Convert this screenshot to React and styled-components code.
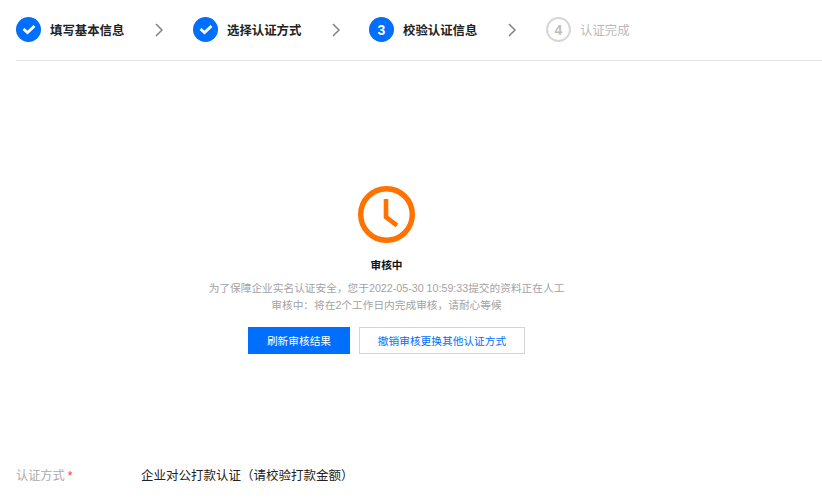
import React from 'react';
import styled, { createGlobalStyle } from 'styled-components';

const GlobalStyle = createGlobalStyle`
  html, body { margin: 0; padding: 0; background: #fff; }
  body { font-family: "Liberation Sans", "Noto Sans CJK SC", sans-serif; overflow: hidden; }
`;

const Page = styled.div`
  width: 822px;
  height: 500px;
  padding-left: 16px;
  box-sizing: border-box;
  overflow: hidden;
`;

const Steps = styled.div`
  display: flex;
  align-items: center;
  height: 61px;
  padding-bottom: 1px;
  box-sizing: border-box;
  border-bottom: 1px solid #e2e2e2;
`;

const Step = styled.div`
  display: flex;
  align-items: center;
  width: ${(p) => p.$width}px;
`;

const Circle = styled.div`
  width: 25px;
  height: 25px;
  border-radius: 50%;
  box-sizing: border-box;
  display: flex;
  align-items: center;
  justify-content: center;
  font-size: 14px;
  font-weight: 700;
  color: ${(p) => (p.$off ? '#bdbdbd' : '#fff')};
  background: ${(p) => (p.$off ? '#fff' : '#006eff')};
  border: ${(p) => (p.$off ? '2px solid #d6d6d6' : 'none')};
`;

const StepLabel = styled.span`
  margin-left: 9px;
  font-size: 12.4px;
  font-weight: ${(p) => (p.$off ? 400 : 700)};
  color: ${(p) => (p.$off ? '#bbbbbb' : '#222')};
  white-space: nowrap;
`;

const Arrow = styled.svg`
  width: 8px;
  height: 14px;
  margin-left: 31px;
  flex: none;
`;

const Result = styled.div`
  width: 741px;
  margin-top: 125px;
  display: flex;
  flex-direction: column;
  align-items: center;
`;

const Clock = styled.svg`
  width: 57px;
  height: 57px;
  display: block;
`;

const Title = styled.div`
  margin-top: 14px;
  font-size: 10.7px;
  line-height: 16px;
  font-weight: 700;
  color: #111;
`;

const Desc = styled.div`
  margin-top: 7px;
  width: 360px;
  font-size: 10.7px;
  line-height: 16.5px;
  color: #a3a3a3;
  text-align: center;
`;

const Buttons = styled.div`
  margin-top: 14px;
  display: flex;
  gap: 9px;
`;

const Button = styled.button`
  height: 27px;
  width: ${(p) => p.$width}px;
  padding: 0;
  box-sizing: border-box;
  font-family: inherit;
  font-size: 10.7px;
  border: ${(p) => (p.$primary ? 'none' : '1px solid #d4d4d4')};
  background: ${(p) => (p.$primary ? '#006eff' : '#fff')};
  color: ${(p) => (p.$primary ? '#fff' : '#006eff')};
`;

const Field = styled.div`
  margin-top: 113px;
  display: flex;
  align-items: center;
  line-height: 18px;
`;

const FieldLabel = styled.div`
  width: 125px;
  font-size: 12.2px;
  color: #aaa;
`;

const Required = styled.span`
  margin-left: 3px;
  color: #e54545;
`;

const FieldValue = styled.div`
  font-size: 12.5px;
  color: #222;
`;

const Check = () => (
  <svg width="14" height="11" viewBox="0 0 14 11" fill="none">
    <path d="M1.5 5 L5.5 8.6 L12.5 2" stroke="#fff" strokeWidth="2.8" />
  </svg>
);

const Chevron = () => (
  <Arrow viewBox="0 0 8 14" fill="none">
    <path d="M1 1 L7 7 L1 13" stroke="#808080" strokeWidth="1.5" />
  </Arrow>
);

const App = () => (
  <React.Fragment>
    <GlobalStyle />
    <Page>
      <Steps>
        <Step $width={177}>
          <Circle><Check /></Circle>
          <StepLabel>填写基本信息</StepLabel>
          <Chevron />
        </Step>
        <Step $width={176}>
          <Circle><Check /></Circle>
          <StepLabel>选择认证方式</StepLabel>
          <Chevron />
        </Step>
        <Step $width={177}>
          <Circle>3</Circle>
          <StepLabel>校验认证信息</StepLabel>
          <Chevron />
        </Step>
        <Step $width={120}>
          <Circle $off>4</Circle>
          <StepLabel $off>认证完成</StepLabel>
        </Step>
      </Steps>
      <Result>
        <Clock viewBox="0 0 57 57" fill="none">
          <circle cx="28.5" cy="28.5" r="25.8" stroke="#ff7200" strokeWidth="5.4" />
          <path d="M28 13 V31 L39 39.5" stroke="#ff7200" strokeWidth="4.6" />
        </Clock>
        <Title>审核中</Title>
        <Desc>为了保障企业实名认证安全，您于2022-05-30 10:59:33提交的资料正在人工审核中：将在2个工作日内完成审核，请耐心等候</Desc>
        <Buttons>
          <Button $primary $width={102}>刷新审核结果</Button>
          <Button $width={166}>撤销审核更换其他认证方式</Button>
        </Buttons>
      </Result>
      <Field>
        <FieldLabel>认证方式<Required>*</Required></FieldLabel>
        <FieldValue>企业对公打款认证（请校验打款金额）</FieldValue>
      </Field>
    </Page>
  </React.Fragment>
);

export default App;
